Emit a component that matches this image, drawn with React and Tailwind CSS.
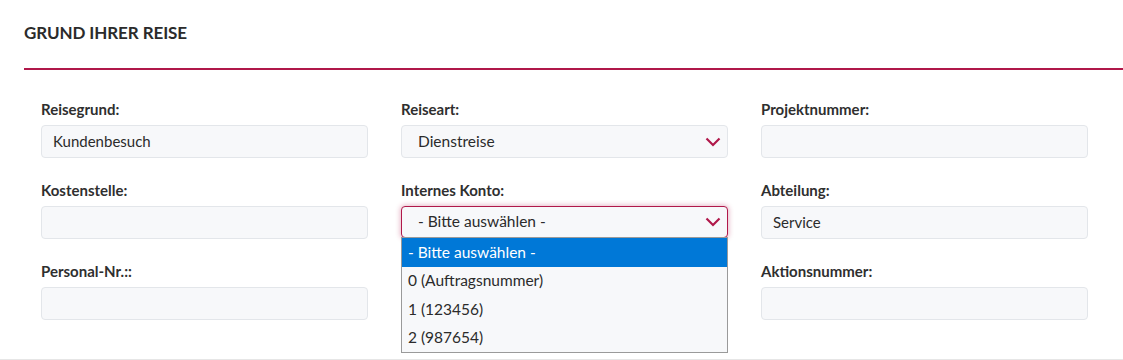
import { useState } from "react";

const font = { fontFamily: "Lato, 'Open Sans', sans-serif" };

function Chevron() {
  return (
    <svg width="16" height="10" viewBox="0 0 16 10" className="shrink-0">
      <polyline points="1.5,1.5 8,8 14.5,1.5" fill="none" stroke="#b0184a" strokeWidth="2.2" />
    </svg>
  );
}

function Field({ label, value, select, focused, children }) {
  return (
    <div className="relative flex flex-col">
      <label className="mb-[7px] h-[18px] text-[15px] font-bold leading-[18px] text-[#2f2f2f]">{label}</label>
      {select ? (
        <div
          className={
            focused
              ? "flex h-[32px] items-center justify-between rounded-[4px] border border-[#b0184a] bg-[#f7f8fa] pl-[16px] pr-[6px] text-[15.5px] text-[#2b2b2b] shadow-[0_0_5px_1px_rgba(176,24,74,0.3)]"
              : "flex h-[33px] items-center justify-between rounded-[4px] border border-[#e3e6ea] bg-[#f7f8fa] pl-[16px] pr-[6px] text-[15.5px] text-[#2b2b2b]"
          }
        >
          <span>{value}</span>
          <Chevron />
        </div>
      ) : (
        <div className="flex h-[33px] items-center rounded-[4px] border border-[#e3e6ea] bg-[#f7f8fa] px-[11px] text-[15px] text-[#2b2b2b]">
          {value}
        </div>
      )}
      {children}
    </div>
  );
}

const options = ["- Bitte auswählen -", "0 (Auftragsnummer)", "1 (123456)", "2 (987654)"];

export default function App() {
  const [active] = useState(0);

  return (
    <div className="h-[360px] w-full border-b border-[#e6e6e6] bg-white" style={font}>
      <div className="ml-6 flex h-[70px] items-center border-b-2 border-[#b0184a] pb-[3px]">
        <h2 className="text-[17px] font-bold tracking-[-0.1px] text-[#2b2b2b]">GRUND IHRER REISE</h2>
      </div>

      <div className="grid w-[1088px] grid-cols-3 gap-x-[33px] gap-y-[23px] pl-[41px] pt-[30px]">
        <Field label="Reisegrund:" value="Kundenbesuch" />
        <Field label="Reiseart:" value="Dienstreise" select />
        <Field label="Projektnummer:" value="" />

        <Field label="Kostenstelle:" value="" />
        <Field label="Internes Konto:" value="- Bitte auswählen -" select focused>
          <ul className="absolute left-0 top-[56px] z-10 w-[327px] border border-[#9a9a9a] bg-[#f7f8fa] text-[15.5px] text-[#2b2b2b]">
            {options.map((o, i) => (
              <li
                key={o}
                className={
                  i === active
                    ? "flex h-[28.5px] items-center bg-[#0078d7] px-[6px] text-white"
                    : "flex h-[28.5px] items-center px-[6px]"
                }
              >
                {o}
              </li>
            ))}
          </ul>
        </Field>
        <Field label="Abteilung:" value="Service" />

        <Field label="Personal-Nr.::" value="" />
        <Field label={"\u00a0"} value="" />
        <Field label="Aktionsnummer:" value="" />
      </div>
    </div>
  );
}
